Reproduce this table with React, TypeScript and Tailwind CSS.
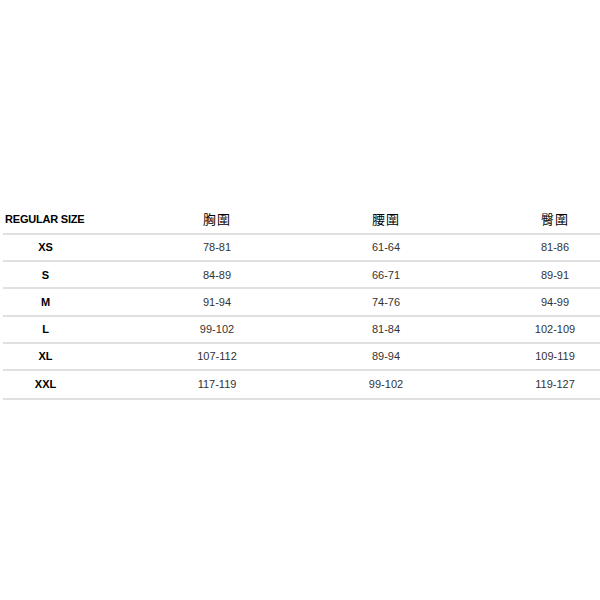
const rows = [
  ["XS", "78-81", "61-64", "81-86"],
  ["S", "84-89", "66-71", "89-91"],
  ["M", "91-94", "74-76", "94-99"],
  ["L", "99-102", "81-84", "102-109"],
  ["XL", "107-112", "89-94", "109-119"],
  ["XXL", "117-119", "99-102", "119-127"],
];

const cols = "grid grid-cols-[85px_80px_80px_80px] gap-x-[89px] items-center";

export default function App() {
  return (
    <div className="h-[600px] w-[600px] bg-white pt-[205px] pl-[3px] font-['Liberation_Sans',Arial,sans-serif]">
      <div className={`${cols} h-[30px] border-b-2 border-[#e0e0e0]`}>
        <div className="pl-[2px] text-[11px] font-bold tracking-[-0.2px] text-black whitespace-nowrap">
          REGULAR SIZE
        </div>
        {["胸圍", "腰圍", "臀圍"].map((h) => (
          <div
            key={h}
            className="text-center text-[13px] tracking-[1px] text-black font-['Noto_Sans_CJK_TC','Noto_Sans_CJK_SC',sans-serif]"
          >
            {h}
          </div>
        ))}
      </div>
      {rows.map((r, i) => (
        <div
          key={r[0]}
          className={`${cols} ${i === rows.length - 1 ? "h-[29px]" : "h-[27.2px]"} border-b-2 border-[#e0e0e0]`}
        >
          <div className="text-center text-[11px] font-bold text-black">{r[0]}</div>
          {r.slice(1).map((v, j) => (
            <div key={j} className="text-center text-[11px] text-[#333]">
              {v}
            </div>
          ))}
        </div>
      ))}
    </div>
  );
}
